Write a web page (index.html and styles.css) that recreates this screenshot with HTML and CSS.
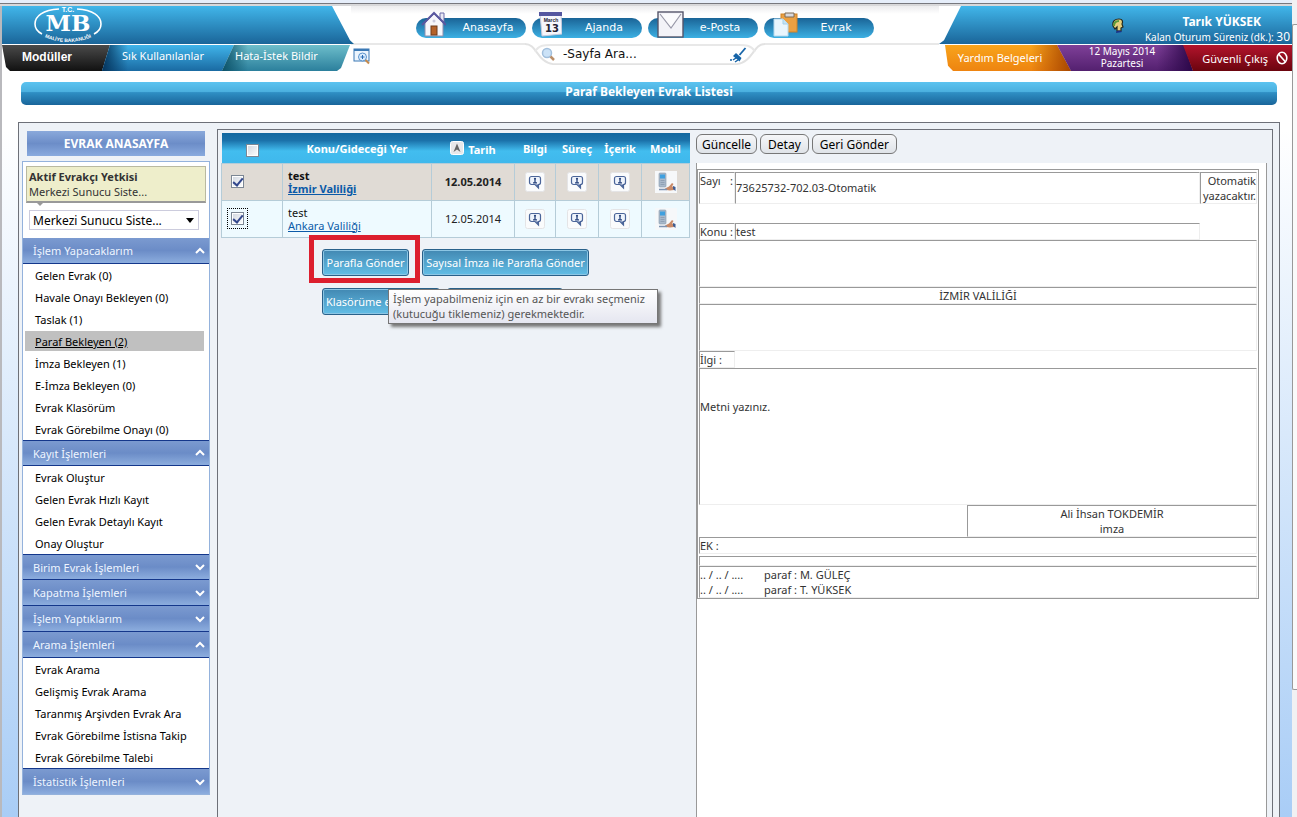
FILE: index.html
```html
<!DOCTYPE html>
<html lang="tr">
<head>
<meta charset="utf-8">
<title>Paraf Bekleyen Evrak Listesi</title>
<link rel="stylesheet" href="styles.css">
</head>
<body>
<svg width="0" height="0" class="defs" aria-hidden="true">
  <symbol id="info" viewBox="0 0 20 20">
    <rect x="0.5" y="0.5" width="19" height="19" rx="2" fill="#fafbfc" stroke="#e4e4e6"/>
    <path d="M6.500 4.500h7a2 2 0 0 1 2 2v4a2 2 0 0 1-2 2V16L10 12.500H6.500a2 2 0 0 1-2-2v-4a2 2 0 0 1 2-2z" fill="#eef3fb" stroke="#4b6599" stroke-width="1.200"/>
    <path d="M10.500 12.500h3V16z" fill="#4b6599"/>
    <circle cx="10" cy="6.800" r="1.100" fill="#26427c"/>
    <path d="M10 7.500v3M8 10.800h4" stroke="#26427c" stroke-width="1.300"/>
  </symbol>
  <symbol id="mobile" viewBox="0 0 22 22">
    <rect width="22" height="22" fill="#f6f8fa"/>
    <rect x="4" y="2" width="7" height="14" rx="1" fill="#a9b9cb" stroke="#8899ab" stroke-width=".6"/>
    <rect x="5" y="3.500" width="5" height="4" fill="#3fa0df"/>
    <path d="M5.500 9.500h4M5.500 11.500h4M5.500 13.500h4" stroke="#8fa0b4"/>
    <path d="M10 17.500l4-2 3-3.500 1.500 1-1.500 2.500 2 .5v3l-4 .5-4-.5z" fill="#c98a68"/>
    <path d="M18 15l2.500 1v4l-2.500-2z" fill="#3f5d92"/>
    <path d="M4 18.500h8" stroke="#7d93b1" stroke-width="1.500"/>
  </symbol>
  <symbol id="up" viewBox="0 0 10 8"><path d="M1 6l4-4 4 4" fill="none" stroke="#fff" stroke-width="2"/></symbol>
  <symbol id="down" viewBox="0 0 10 8"><path d="M1 2l4 4 4-4" fill="none" stroke="#fff" stroke-width="2"/></symbol>
</svg>
<div class="page">
  <header class="header">
    <div class="side side-left">
      <div class="band band-left">
        <svg class="logo" width="72" height="38" viewBox="0 0 72 38" role="img" aria-label="T.C. MB Maliye Bakanlığı">
          <path d="M28 3C12 4 4 10 4 18c0 5 3 8 7 10M46 3c16 1 24 7 24 15 0 5-3 8-7 10" fill="none" stroke="#fff" stroke-width="1.600"/>
          <text x="37" y="6" class="logo-top" text-anchor="middle">T.C.</text>
          <text x="37" y="25" class="logo-main" text-anchor="middle">MB</text>
          <path id="arc" d="M9 29Q37 43 65 29" fill="none"/>
          <text class="logo-arc"><textPath href="#arc" startOffset="50%" text-anchor="middle">MALİYE BAKANLIĞI</textPath></text>
        </svg>
      </div>
      <nav class="tabs">
        <a href="#" class="tab tab-dark">Modüller</a>
        <a href="#" class="tab tab-blue">Sık Kullanılanlar</a>
        <a href="#" class="tab tab-teal">Hata-İstek Bildir</a>
        <button class="icon-btn" aria-label="Ara">
          <svg width="18" height="17" viewBox="0 0 18 17"><rect x="1" y="1" width="15" height="12" fill="#edf5fd" stroke="#3b79b5"/><path d="M1 2h15" stroke="#3b79b5" stroke-width="2"/><circle cx="9.500" cy="9" r="4" fill="#dceeff" stroke="#5c93cb"/><path d="M9.500 7v4M7.500 9h4" stroke="#2a6cb4"/><path d="M12.500 12l3.500 3.500" stroke="#c58a4c" stroke-width="2"/></svg>
        </button>
      </nav>
    </div>
    <div class="center">
      <nav class="pills">
        <a href="#" class="pill"><svg class="pill-icon" width="30" height="28" viewBox="0 0 30 28"><path d="M24 3h4v9h-4z" fill="#e9e9f4" stroke="#6b6ba8"/><path d="M9 13l9-9 9 9v13H9z" fill="#f7f7fb" stroke="#8f8fae"/><path d="M6 15L18 3l12 12" fill="none" stroke="#5a58a0" stroke-width="2"/><rect x="15" y="16" width="6" height="9" fill="#b4622a" stroke="#6e3d1d"/><circle cx="18" cy="11" r="1.500" fill="#c9c9dc"/></svg>Anasayfa</a>
        <a href="#" class="pill"><svg class="pill-icon" width="30" height="28" viewBox="0 0 30 28"><path d="M8 4h21l1 20-20 2z" fill="#f5f6fb" stroke="#c5c9dc"/><path d="M7 2h23v4H7z" fill="#5456a0"/><text x="19" y="12" class="cal-month" text-anchor="middle">March</text><text x="20" y="22" class="cal-day" text-anchor="middle">13</text></svg>Ajanda</a>
        <a href="#" class="pill"><svg class="pill-icon" width="36" height="28" viewBox="0 0 36 28"><rect x="10" y="2" width="25" height="25" fill="#f3f3f8" stroke="#54546a" stroke-width="1.400"/><path d="M12 4l11 14L33 4" fill="#fbfbfd" stroke="#9898a8" stroke-width="1.200"/></svg>e-Posta</a>
        <a href="#" class="pill"><svg class="pill-icon" width="36" height="28" viewBox="0 0 36 28"><rect x="17" y="4" width="16" height="18" fill="#eba043" stroke="#d08226"/><path d="M21 3h9v4h-9z" fill="#d9d9de" stroke="#7c6a55"/><path d="M10 9h9l5 5v12H10z" fill="#e9f5fd" stroke="#b4d9ee"/><path d="M19 9v5h5" fill="#c5e4f5" stroke="#a5cfe9"/></svg>Evrak</a>
      </nav>
      <div class="search-row">
        <span class="rule"></span>
        <form class="search">
          <svg class="search-shape" viewBox="0 0 240 24" preserveAspectRatio="none"><path d="M0 1C12 1 12 20 28 22H212C228 20 228 1 240 1" fill="#fff" stroke="#e2e2e2" stroke-width="2"/><path d="M10 9C14 2 20 2 26 2H214C220 2 226 2 230 9" fill="none" stroke="#e8e8e8" stroke-width="2"/></svg>
          <svg width="15" height="15" viewBox="0 0 15 15"><circle cx="6" cy="6" r="4.500" fill="#cbe2f7" stroke="#a2bfdc" stroke-width="1.500"/><path d="M9.500 9.500l3.500 3.500" stroke="#bb8f6a" stroke-width="2.500"/></svg>
          <input class="search-input" type="text" value="-Sayfa Ara..." aria-label="Sayfa Ara">
          <button class="icon-btn" type="button" aria-label="Temizle"><svg width="18" height="16" viewBox="0 0 18 16"><path d="M16.500 1l-6 7" stroke="#1664a8" stroke-width="1.800"/><path d="M7 6l5.500 5-2 3.500L4 9z" fill="#1664a8"/><path d="M1 13h2M4 13l3-2M6 15l3-2" stroke="#1664a8" stroke-width="1.500"/></svg></button>
        </form>
        <span class="rule"></span>
      </div>
    </div>
    <div class="side side-right">
      <div class="band band-right">
        <svg class="avatar" width="14" height="16" viewBox="0 0 14 16"><path d="M2 8C1 3 4 1 8 1s4 3 3 5l1 3-2 1v3H6V9L4 11z" fill="#e6cf7c" stroke="#232a20" stroke-width="1.200"/><path d="M3 8c0-4 2-5 5-5" stroke="#5d9a3a" stroke-width="2" fill="none"/><path d="M5 15c0-3 4-3 6-1" fill="#1b2f86"/></svg>
        <div class="user"><strong>Tarık YÜKSEK</strong><span>Kalan Oturum Süreniz (dk.): <span class="minutes">30</span></span></div>
      </div>
      <div class="tabs">
        <a href="#" class="rtab rtab-orange">Yardım Belgeleri</a>
        <div class="rtab rtab-purple">12 Mayıs 2014<br>Pazartesi</div>
        <a href="#" class="rtab rtab-red">Güvenli Çıkış <svg width="12" height="14" viewBox="0 0 12 14"><ellipse cx="6" cy="7" rx="4.800" ry="5.800" fill="none" stroke="#fff" stroke-width="1.600"/><path d="M2.500 3l7 8" stroke="#fff" stroke-width="1.600"/></svg></a>
      </div>
    </div>
  </header>

  <h1 class="title">Paraf Bekleyen Evrak Listesi</h1>

  <main class="frame">
    <aside class="sidebar">
      <h2 class="side-title">EVRAK ANASAYFA</h2>
      <div class="menu">
        <div class="authority">
          <div class="note"><strong>Aktif Evrakçı Yetkisi</strong><br>Merkezi Sunucu Siste...</div>
          <select class="server" aria-label="Aktif Evrakçı Yetkisi"><option>Merkezi Sunucu Siste...</option></select>
        </div>
        <button class="group">İşlem Yapacaklarım<svg width="10" height="8"><use href="#up"/></svg></button>
        <ul class="items">
          <li><a href="#">Gelen Evrak (0)</a></li>
          <li><a href="#">Havale Onayı Bekleyen (0)</a></li>
          <li><a href="#">Taslak (1)</a></li>
          <li><a href="#" class="current">Paraf Bekleyen (2)</a></li>
          <li><a href="#">İmza Bekleyen (1)</a></li>
          <li><a href="#">E-İmza Bekleyen (0)</a></li>
          <li><a href="#">Evrak Klasörüm</a></li>
          <li><a href="#">Evrak Görebilme Onayı (0)</a></li>
        </ul>
        <button class="group">Kayıt İşlemleri<svg width="10" height="8"><use href="#up"/></svg></button>
        <ul class="items">
          <li><a href="#">Evrak Oluştur</a></li>
          <li><a href="#">Gelen Evrak Hızlı Kayıt</a></li>
          <li><a href="#">Gelen Evrak Detaylı Kayıt</a></li>
          <li><a href="#">Onay Oluştur</a></li>
        </ul>
        <button class="group">Birim Evrak İşlemleri<svg width="10" height="8"><use href="#down"/></svg></button>
        <button class="group">Kapatma İşlemleri<svg width="10" height="8"><use href="#down"/></svg></button>
        <button class="group">İşlem Yaptıklarım<svg width="10" height="8"><use href="#down"/></svg></button>
        <button class="group">Arama İşlemleri<svg width="10" height="8"><use href="#up"/></svg></button>
        <ul class="items">
          <li><a href="#">Evrak Arama</a></li>
          <li><a href="#">Gelişmiş Evrak Arama</a></li>
          <li><a href="#">Taranmış Arşivden Evrak Ara</a></li>
          <li><a href="#">Evrak Görebilme İstisna Takip</a></li>
          <li><a href="#">Evrak Görebilme Talebi</a></li>
        </ul>
        <button class="group">İstatistik İşlemleri<svg width="10" height="8"><use href="#down"/></svg></button>
      </div>
    </aside>

    <section class="content">
      <div class="list">
        <table class="grid">
          <colgroup><col class="c-check"><col class="c-subject"><col class="c-date"><col class="c-info"><col class="c-flow"><col class="c-flow"><col class="c-mobile"></colgroup>
          <thead>
            <tr>
              <th><input type="checkbox" class="check check-all" aria-label="Tümünü seç"></th>
              <th>Konu/Gideceği Yer</th>
              <th><svg class="sort" width="14" height="14" viewBox="0 0 14 14"><rect x=".5" y=".5" width="13" height="13" rx="2" fill="#e8e8ea" stroke="#fff"/><path d="M7 2.500l3.500 8.500L7 8.500 3.500 11z" fill="#666"/></svg>Tarih</th>
              <th>Bilgi</th><th>Süreç</th><th>İçerik</th><th>Mobil</th>
            </tr>
          </thead>
          <tbody>
            <tr class="unread">
              <td class="pick"><input type="checkbox" class="check" checked aria-label="İzmir Valiliği"></td>
              <td class="subject">test<br><a href="#">İzmir Valiliği</a></td>
              <td>12.05.2014</td>
              <td><svg width="20" height="20"><use href="#info"/></svg></td>
              <td><svg width="20" height="20"><use href="#info"/></svg></td>
              <td><svg width="20" height="20"><use href="#info"/></svg></td>
              <td><svg width="22" height="22"><use href="#mobile"/></svg></td>
            </tr>
            <tr>
              <td class="pick"><span class="focus"><input type="checkbox" class="check" checked aria-label="Ankara Valiliği"></span></td>
              <td class="subject">test<br><a href="#">Ankara Valiliği</a></td>
              <td>12.05.2014</td>
              <td><svg width="20" height="20"><use href="#info"/></svg></td>
              <td><svg width="20" height="20"><use href="#info"/></svg></td>
              <td><svg width="20" height="20"><use href="#info"/></svg></td>
              <td><svg width="22" height="22"><use href="#mobile"/></svg></td>
            </tr>
          </tbody>
        </table>
        <div class="actions">
          <div class="action-row">
            <span class="marked"><button class="action send">Parafla Gönder</button></span>
            <button class="action sign">Sayısal İmza ile Parafla Gönder</button>
          </div>
          <div class="action-row">
            <button class="action folder">Klasörüme ekle</button>
            <button class="action other" tabindex="-1"></button>
          </div>
          <div class="tooltip" role="tooltip">İşlem yapabilmeniz için en az bir evrakı seçmeniz (kutucuğu tiklemeniz) gerekmektedir.</div>
        </div>
      </div>

      <div class="preview">
        <div class="toolbar">
          <button class="tool">Güncelle</button>
          <button class="tool tool-wide">Detay</button>
          <button class="tool tool-wide">Geri Gönder</button>
        </div>
        <div class="paper">
          <article class="doc">
            <div class="doc-row row-number">
              <div class="cell label"><span>Sayı</span><span>:</span></div>
              <div class="cell value">73625732-702.03-Otomatik</div>
              <div class="cell date">Otomatik<br>yazacaktır.</div>
            </div>
            <div class="doc-row row-subject">
              <div class="cell label"><span>Konu</span><span>:</span></div>
              <div class="cell value">test</div>
              <div class="spacer"></div>
            </div>
            <div class="cell blank"></div>
            <div class="cell centered">İZMİR VALİLİĞİ</div>
            <div class="cell blank"></div>
            <div class="cell ref">İlgi :</div>
            <div class="cell text">Metni yazınız.</div>
            <div class="cell signature">Ali İhsan TOKDEMİR<br>imza</div>
            <div class="cell attach">EK :</div>
            <div class="cell thin"></div>
            <div class="cell initials"><span>.. / .. / ....</span><span>paraf : M. GÜLEÇ</span><span>.. / .. / ....</span><span>paraf : T. YÜKSEK</span></div>
          </article>
        </div>
      </div>
    </section>
  </main>
</div>
<div class="scroll" aria-hidden="true"><div class="thumb"></div></div>
</body>
</html>
```
FILE: styles.css
```css
* { box-sizing: border-box; }
html { height: 100%; }
body {
  margin: 0;
  height: 100%;
  display: flex;
  overflow: hidden;
  font: 11px/15px "Noto Sans", "Open Sans", sans-serif;
  color: #000;
  background: #fff;
}
a { color: inherit; text-decoration: none; }
button, input, select { font: inherit; margin: 0; }
svg { flex: none; }
.defs { position: absolute; }

.page {
  flex: 1;
  min-width: 0;
  display: flex;
  flex-direction: column;
  border-left: 2px solid #b9b9bd;
  background: linear-gradient(#fff 0, #fff 130px, #a9cdf6 100%);
}
.page::before {
  content: "";
  flex: none;
  height: 6px;
  margin-left: -2px;
  background: linear-gradient(#e6eefa 0 3px, #77787e 3px 4px, #d8d8da 4px 6px);
}

/* header */
.header { display: flex; flex: none; height: 65px; background: #fff; }
.side { position: relative; z-index: 1; display: flex; flex-direction: column; gap: 1px; flex: none; }
.side-left { width: 370px; }
.side-right { width: 353px; }
.band { height: 38px; background: linear-gradient(#41b6ea, #1a6599); color: #fff; }
.band-left { width: 352px; padding-left: 29px; clip-path: polygon(0 0, calc(100% - 22px) 0, calc(100% - 4px) 90%, 100% 100%, 0 100%); }
.band-right { display: flex; justify-content: flex-end; gap: 20px; padding: 8px 2px 0 0; clip-path: polygon(22px 0, 100% 0, 100% 100%, 0 100%, 5px 90%); }
.logo { display: block; fill: #fff; overflow: visible; }
.logo-top { font: bold 7px "Liberation Sans", sans-serif; }
.logo-main { font: bold 23px "DejaVu Serif", serif; }
.logo-arc { font: bold 5px "Liberation Sans", sans-serif; }
.avatar { margin: 4px 0 0; }
.user { display: flex; flex-direction: column; align-items: flex-end; font-size: 10px; line-height: 16px; }
.user strong { padding-right: 29px; font: bold 12px/15px "Noto Sans", sans-serif; }
.minutes { font-size: 12px; }

.tabs { display: flex; height: 26px; }
.tab { color: #fff; height: 26px; line-height: 22px; }
.tab-dark { width: 108px; padding-left: 20px; font: bold 12px/25px "Liberation Sans", sans-serif; background: linear-gradient(#4a4a4a, #111); clip-path: polygon(0 0, 100% 0, calc(100% - 8px) 100%, 8px 100%, 4px 85%); }
.tab-blue { width: 132px; margin-left: -8px; padding-left: 20px; background: linear-gradient(90deg, #04345c, transparent 26px), linear-gradient(#40b4ea, #1a6aa2); clip-path: polygon(8px 0, 100% 0, calc(100% - 12px) 100%, 0 100%); }
.tab-teal { width: 128px; margin-left: -12px; padding-left: 13px; background: linear-gradient(90deg, #0d5268, transparent 26px), linear-gradient(#6dbecb, #2b7f9c); clip-path: polygon(12px 0, 100% 0, calc(100% - 9px) 88%, calc(100% - 13px) 100%, 0 100%); }
.icon-btn { border: 0; padding: 0; background: none; line-height: 0; }
.tabs .icon-btn { margin-left: 3px; padding-bottom: 4px; }

.center { flex: 1; min-width: 0; display: flex; flex-direction: column; margin-left: -21px; }
.pills { display: flex; justify-content: center; gap: 6px; padding: 12px 0 5px; background: linear-gradient(#ececee, #fff 8px); }
.pill {
  position: relative;
  width: 110px;
  height: 20px;
  padding-left: 34px;
  border-radius: 10px;
  background: linear-gradient(#1a6497, #3cb0e3);
  color: #fff;
  font: 11px/20px "DejaVu Sans", sans-serif;
  text-align: center;
}
.pill-icon { position: absolute; left: 0; bottom: 0; }
.cal-month { font: bold 5px "Liberation Sans", sans-serif; fill: #223; }
.cal-day { font: bold 10px "DejaVu Sans", sans-serif; fill: #223; }
.search-row { display: flex; align-items: flex-start; height: 24px; }
.rule { flex: 1; height: 2px; background: #e8e8e8; }
.search { position: relative; display: flex; align-items: center; gap: 7px; width: 240px; height: 23px; padding: 0 18px 0 16px; }
.search > * { position: relative; }
.search .search-shape { position: absolute; inset: 0; width: 100%; height: 100%; }
.search-input { flex: 1; min-width: 0; padding: 0; border: 0; outline: 0; background: none; font: 12px/15px "DejaVu Sans", sans-serif; color: #111; }

.rtab { color: #fff; text-align: center; height: 26px; }
.rtab-orange { width: 126px; margin-left: 6px; line-height: 25px; padding-right: 16px; background: linear-gradient(270deg, #a84700, transparent 40px), linear-gradient(#f8a41c, #ee8410); clip-path: polygon(0 0, 112px 0, 100% 100%, 8px 100%, 3px 80%); }
.rtab-purple { width: 136px; margin-left: -14px; padding-right: 6px; font-size: 10px; line-height: 12px; background: linear-gradient(270deg, #2b0749, transparent 36px), linear-gradient(#7f4098, #53206f); clip-path: polygon(0 0, 127px 0, 100% 100%, 14px 100%); }
.rtab-red { display: flex; justify-content: flex-end; align-items: center; gap: 8px; flex: 1; margin-left: -10px; padding-right: 4px; background: linear-gradient(#b3142c, #6b040e); clip-path: polygon(0 0, 100% 0, 100% 100%, 10px 100%); }

.title {
  flex: none;
  height: 23px;
  margin: 11px 15px 17px 19px;
  border-radius: 5px;
  background: linear-gradient(#5cc3f0 0, #4bb0df 42%, #2f8fc4 46%, #19659a 100%);
  color: #fff;
  font: bold 12px/19px "Noto Sans", sans-serif;
  text-align: center;
}

/* frame */
.frame { flex: 1; min-height: 0; display: flex; margin: 0 12px 0 16px; border: solid #6d7078; border-width: 1px 1px 0; background: #eef2f7; }
.sidebar { width: 195px; flex: none; padding: 8px 4px 0 3px; }
.side-title { height: 25px; margin: 0 5px 5px; font: bold 12px/25px "Noto Sans", sans-serif; text-align: center; color: #fff; background: linear-gradient(#8aa9db, #6c8dc8 50%, #89aade); }
.menu { border: 1px solid #94b2dc; background: #fff; }
.authority { position: relative; padding: 4px 3px 7px; height: 76px; }
.note { position: relative; width: 180px; height: 37px; padding: 2px 2px 0; border: 1px solid #b9b9a0; border-bottom: 2px solid #999; background: #eeeecb; color: #333; }
.note::after { content: ""; position: absolute; left: 8px; top: 100%; border: 5px solid transparent; border-top-color: #999; border-bottom: 0; }
.server { display: block; width: 170px; height: 20px; margin: 7px 0 0 3px; padding: 0 3px; border: 1px solid #ccd; color: #000; background: #fff; font-size: 12px; appearance: none; }
.authority::after { content: ""; position: absolute; left: 163px; bottom: 15px; border: 4px solid transparent; border-top: 5px solid #000; border-bottom: 0; pointer-events: none; }
.group { display: flex; align-items: center; justify-content: space-between; width: 100%; height: 26px; padding: 0 4px 0 10px; border: 0; border-bottom: 1px solid #14378b; background: linear-gradient(#7b9ad0, #6b8cc7 50%, #8cadde); color: #eef5ff; text-align: left; }
.group + .group, .items + .group { border-top: 1px solid #14378b; }
.group + .group { margin-top: -1px; height: 27px; }
.group:last-child { border-bottom: 0; }
.items { list-style: none; margin: 0; padding: 0 5px 0 2px; }
.items li { height: 22px; padding-top: 1px; }
.items a { display: block; height: 20px; line-height: 21px; padding-left: 10px; }
.items .current { background: #c0c0c0; text-decoration: underline; }

.content { flex: 1; min-width: 0; display: flex; margin: 6px 6px 0 3px; border: solid #6d7078; border-width: 1px 1px 0; }
.list { width: 477px; flex: none; padding: 3px 6px 0 3px; }
.grid { width: 468px; table-layout: fixed; border-collapse: collapse; text-align: center; }
.c-check { width: 61px; } .c-subject { width: 149px; } .c-date { width: 83px; } .c-info { width: 41px; } .c-flow { width: 43px; } .c-mobile { width: 48px; }
.grid thead tr { height: 30px; background: linear-gradient(#12679f 0, #1b72aa 25%, #42bdef 60%, #3fb8ec 100%); }
.grid th { padding: 2px 0 0; color: #fff; }
.sort { margin-right: 4px; vertical-align: -1px; }
.grid td { height: 37px; padding: 0; border: 1px solid #b5ccd8; background: #eefaff; line-height: 13px; color: #222; }
.grid td svg { display: block; margin: 0 auto; }
.grid .unread td { background: #e0dbd5; font-weight: bold; }
.grid .subject { padding-left: 5px; text-align: left; color: #111; }
.subject a { color: #0b5aa8; text-decoration: underline; }
.grid .pick { text-align: left; padding-left: 9px; line-height: 0; }
.check { appearance: none; display: inline-block; width: 13px; height: 13px; vertical-align: middle; border: 1px solid #7c8794; background: linear-gradient(135deg, #d0d6df, #fff); box-shadow: inset 0 0 0 1px #fff; position: relative; }
.check:checked::after { content: ""; position: absolute; left: 3px; top: 0; width: 4px; height: 8px; border: solid #32478c; border-width: 0 2px 2px 0; transform: rotate(40deg); }
.focus { display: inline-block; margin-left: -4px; padding: 3px; border: 1px dotted #000; }

.actions { position: relative; padding: 11px 0 0 101px; }
.action-row { display: flex; margin-bottom: 12px; gap: 13px; }
.action { height: 27px; padding: 0; border: 1px solid #29618a; border-radius: 3px; background: linear-gradient(#4288b2, #62bee6); box-shadow: inset 0 0 0 1px #8cc6e4; color: #fff; white-space: nowrap; }
.marked { position: relative; display: flex; }
.marked::before { content: ""; position: absolute; inset: -14px -11px -7px -13px; border: 5px solid #dc1f2e; }
.send { width: 87px; }
.sign { width: 167px; }
.folder { width: 118px; text-align: left; padding-left: 3px; }
.other { width: 116px; margin-left: -6px; }
.tooltip { position: absolute; left: 167px; top: 51px; width: 270px; padding: 1px 4px 2px; border: 1px solid #767676; background: linear-gradient(#fff, #e5e6f0); box-shadow: 3px 3px 3px #777; color: #555; }

.preview { flex: 1; min-width: 0; display: flex; flex-direction: column; }
.toolbar { display: flex; gap: 3px; padding: 4px 0 9px 1px; }
.tool { height: 20px; padding: 0 5px; border: 1px solid #777; border-radius: 6px; background: linear-gradient(#f6f7f9, #dfe3e8); color: #000; font-size: 12px; line-height: 17px; }
.tool-wide { padding: 0 7px; }
.paper { flex: 1; margin: 0 5px 0 1px; padding: 6px 7px 0 0; border: solid #999; border-width: 0 1px; background: #fff; color: #333; }
.doc { display: flex; flex-direction: column; border: 1px solid #999; padding: 2px 1px 0; }
.doc-row { display: grid; grid-template-columns: 36px 1fr 57px; }
.row-number { height: 32px; margin-bottom: 19px; }
.cell { min-width: 0; border: 1px solid #eee; border-top-color: #999; border-left-color: #999; }
.label { display: flex; justify-content: space-between; padding-right: 1px; white-space: nowrap; }
.row-number .value { line-height: 30px; }
.date { text-align: right; }
.blank { height: 47px; }
.centered { text-align: center; }
.ref { width: 36px; }
.text { height: 137px; padding-top: 30px; }
.signature { width: 290px; align-self: flex-end; text-align: center; }
.attach { margin-bottom: 2px; }
.thin { height: 10px; }
.initials { display: grid; grid-template-columns: 64px 1fr; }

.scroll { flex: none; width: 5px; padding-top: 24px; background: #f1f1f3; }
.thumb { height: 84%; border: 1px solid #999; border-right: 0; border-radius: 2px 0 0 2px; background: #fafafa; }
```
